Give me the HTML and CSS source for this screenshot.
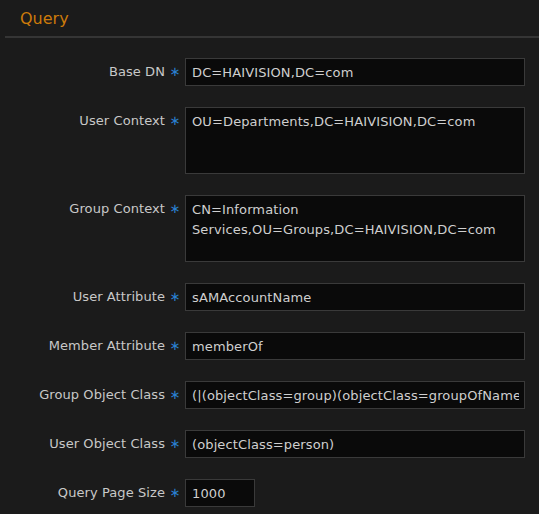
FILE: index.html
```html
<!DOCTYPE html>
<html>
<head>
<meta charset="utf-8">
<link rel="stylesheet" href="styles.css">
</head>
<body>
<div class="panel">
  <div class="panel-head"><h2 class="title">Query</h2></div>
  <form class="form">
    <div class="row">
      <label class="label">Base DN</label><span class="req">∗</span>
      <input class="field wide" type="text" value="DC=HAIVISION,DC=com">
    </div>
    <div class="row">
      <label class="label">User Context</label><span class="req">∗</span>
      <textarea class="field wide area">OU=Departments,DC=HAIVISION,DC=com</textarea>
    </div>
    <div class="row">
      <label class="label">Group Context</label><span class="req">∗</span>
      <textarea class="field wide area">CN=Information Services,OU=Groups,DC=HAIVISION,DC=com</textarea>
    </div>
    <div class="row">
      <label class="label">User Attribute</label><span class="req">∗</span>
      <input class="field wide" type="text" value="sAMAccountName">
    </div>
    <div class="row">
      <label class="label">Member Attribute</label><span class="req">∗</span>
      <input class="field wide" type="text" value="memberOf">
    </div>
    <div class="row">
      <label class="label">Group Object Class</label><span class="req">∗</span>
      <input class="field wide" type="text" value="(|(objectClass=group)(objectClass=groupOfNames))">
    </div>
    <div class="row">
      <label class="label">User Object Class</label><span class="req">∗</span>
      <input class="field wide" type="text" value="(objectClass=person)">
    </div>
    <div class="row">
      <label class="label">Query Page Size</label><span class="req">∗</span>
      <input class="field small" type="text" value="1000">
    </div>
  </form>
</div>
</body>
</html>
```
FILE: styles.css
```css
html, body {
  margin: 0;
  padding: 0;
  background: #1b1b1b;
}
body {
  font-family: "DejaVu Sans", Verdana, sans-serif;
  color: #c8c8c8;
  width: 539px;
  height: 514px;
  overflow: hidden;
}
.panel-head {
  margin-left: 5px;
  height: 38px;
  border-bottom: 2px solid #353535;
  box-sizing: border-box;
  padding-left: 15px;
}
.title {
  margin: 0;
  font-weight: normal;
  font-size: 16px;
  line-height: 37px;
  color: #cc7a0a;
}
.form {
  margin: 0;
  padding-top: 20px;
}
.row {
  display: grid;
  grid-template-columns: 165px 20px auto;
  align-items: start;
  margin-bottom: 21px;
}
.label {
  text-align: right;
  font-size: 13px;
  line-height: 28px;
  color: #c8c8c8;
  letter-spacing: 0.08px;
}
.req {
  text-align: center;
  font-size: 13px;
  line-height: 28px;
  color: #2a7fd0;
}
.field {
  display: block;
  margin: 0;
  box-sizing: border-box;
  height: 28px;
  background: #0a0a0a;
  border: 1px solid #3a3a3a;
  border-radius: 0;
  font-family: "DejaVu Sans", Verdana, sans-serif;
  font-size: 13px;
  line-height: 20px;
  letter-spacing: 0.12px;
  padding: 3px 5px 3px 6px;
  color: #cfcfcf;
  outline: none;
}
.wide { width: 340px; }
.small { width: 70px; }
.area {
  height: 67px;
  padding-top: 4px;
  resize: none;
  overflow: hidden;
}
```
